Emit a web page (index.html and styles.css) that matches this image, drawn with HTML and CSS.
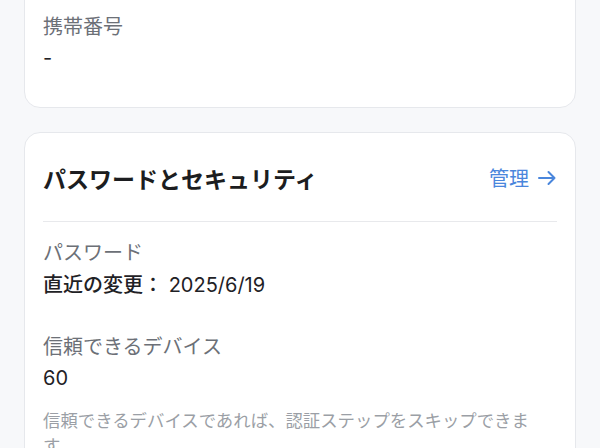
FILE: index.html
```html
<!DOCTYPE html>
<html lang="ja">
<head>
<meta charset="utf-8">
<link rel="stylesheet" href="styles.css">
</head>
<body>
<div class="page">
  <section class="card card-contact">
    <div class="item">
      <div class="label">携帯番号</div>
      <div class="value">-</div>
    </div>
  </section>
  <section class="card card-security">
    <header class="card-head">
      <h2 class="title">パスワードとセキュリティ</h2>
      <a class="manage" href="#">管理
        <svg class="arrow" width="20" height="20" viewBox="0 0 20 20" fill="none" stroke="currentColor" stroke-width="2" stroke-linecap="round" stroke-linejoin="round"><path d="M2 10h15.5M11.5 4l6 6-6 6"/></svg>
      </a>
    </header>
    <div class="item">
      <div class="label">パスワード</div>
      <div class="value"><span class="strong">直近の変更：</span> 2025/6/19</div>
    </div>
    <div class="item item-gap">
      <div class="label">信頼できるデバイス</div>
      <div class="value">60</div>
      <p class="desc">信頼できるデバイスであれば、認証ステップをスキップできます。</p>
    </div>
  </section>
</div>
</body>
</html>
```

FILE: styles.css
```css
* { box-sizing: border-box; }
html, body {
  margin: 0;
  padding: 0;
  background: #f7f8fa;
  font-family: "Noto Sans CJK JP", "Noto Sans", sans-serif;
  overflow: hidden;
}
.page {
  margin-top: -40px;
  padding: 0 24px;
  display: flex;
  flex-direction: column;
  gap: 24px;
}
.card {
  background: #ffffff;
  border: 1px solid #e6e8ec;
  border-radius: 16px;
  padding: 0 18px;
}
.card-contact {
  padding-top: 51px;
  padding-bottom: 35px;
}
.card-security {
  padding-top: 29px;
  padding-bottom: 40px;
}
.card-head {
  display: flex;
  justify-content: space-between;
  align-items: center;
  padding-bottom: 27px;
  border-bottom: 1px solid #e8e9ec;
  margin-bottom: 16px;
}
.title {
  margin: 0;
  font-size: 23px;
  line-height: 32px;
  font-weight: 700;
  color: #1c1d20;
}
.manage {
  display: flex;
  align-items: center;
  gap: 8px;
  font-size: 20px;
  line-height: 28px;
  color: #4a86dc;
  text-decoration: none;
}
.arrow { display: block; }
.label {
  font-size: 20px;
  line-height: 28px;
  color: #6c7077;
}
.value {
  margin-top: 4px;
  font-family: "Inter", "Noto Sans CJK JP", sans-serif;
  font-size: 20px;
  line-height: 28px;
  color: #1f2226;
}
.strong {
  font-family: "Noto Sans CJK JP", sans-serif;
  font-weight: 500;
}
.item-gap { margin-top: 33px; }
.desc {
  margin: 15px 0 0;
  max-width: 500px;
  font-size: 17.4px;
  line-height: 25px;
  color: #9b9fa6;
}
```
